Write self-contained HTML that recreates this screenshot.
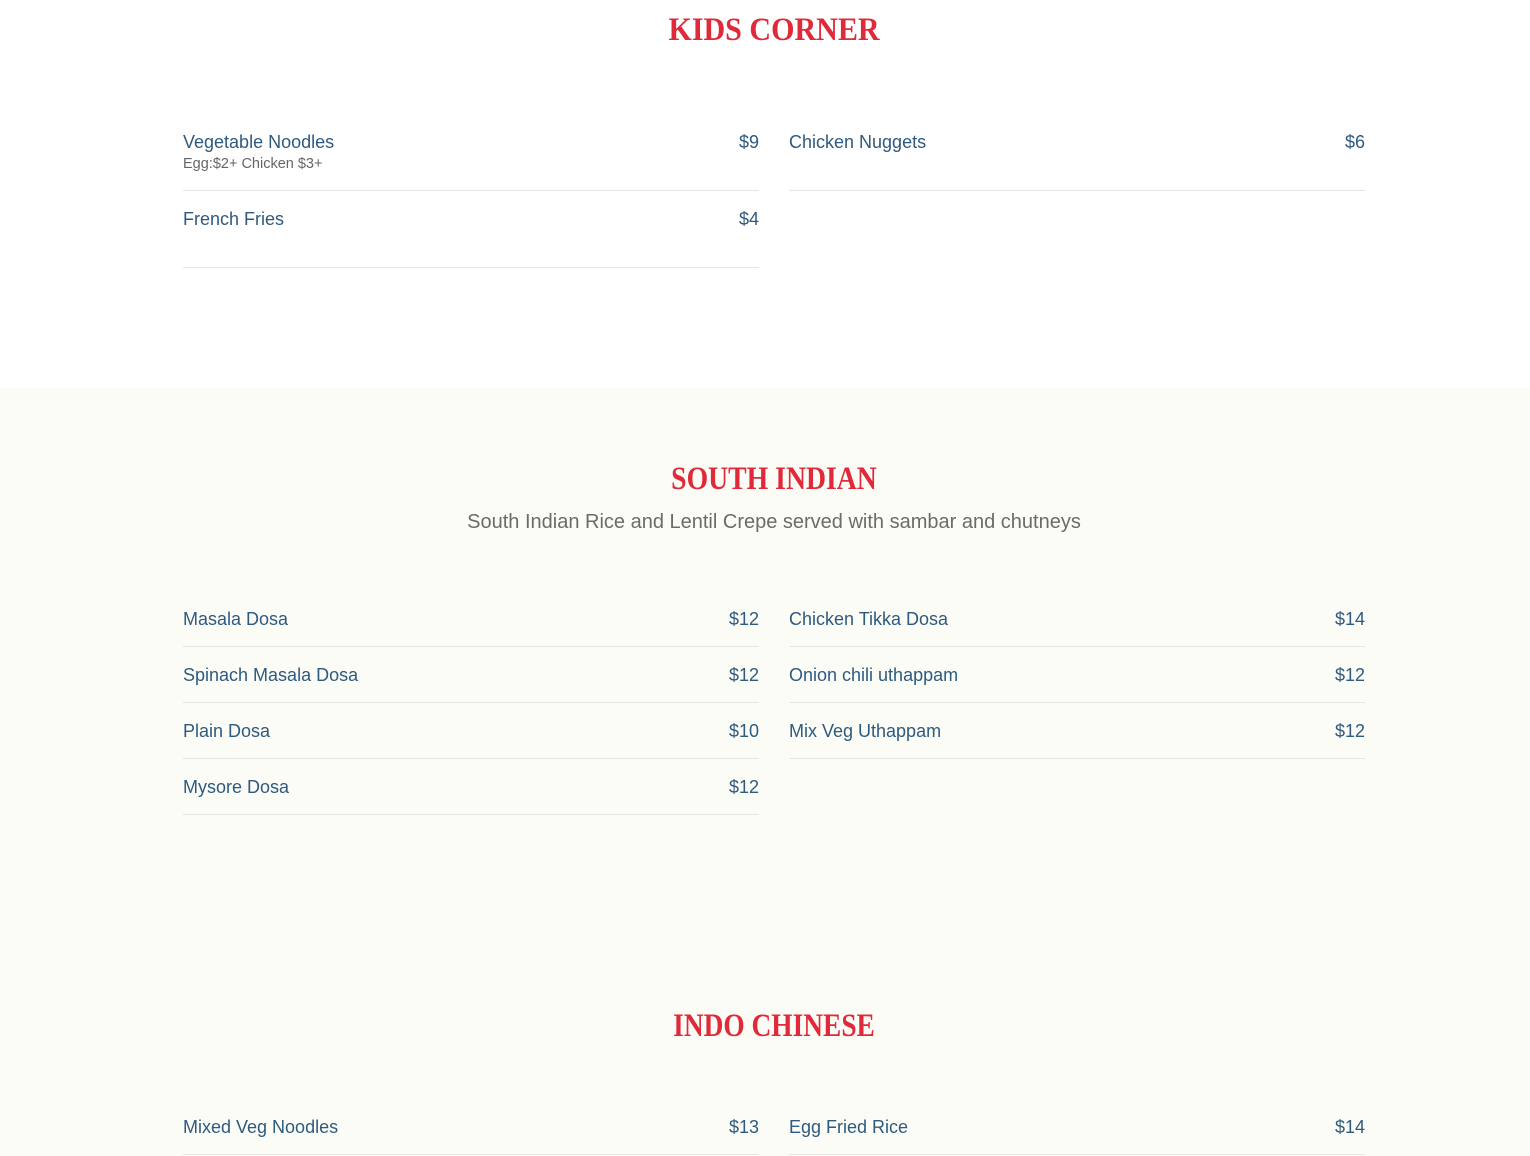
<!DOCTYPE html>
<html><head><meta charset="utf-8"><style>
body{margin:0;width:1530px;height:1156px;overflow:hidden;background:#fff;font-family:"Liberation Sans",sans-serif;position:relative}
.bg2{position:absolute;left:0;top:388px;width:1530px;height:768px;background:#fcfcf7}
h2{position:absolute;left:0;width:1548px;margin:0;text-align:center;font-family:"Liberation Serif",serif;font-weight:bold;color:#e02a3a;font-size:33px;line-height:40px}
.sub{position:absolute;left:0;width:1548px;text-align:center;color:#6b6b6b;font-size:20px}
.it{position:absolute;width:576px;border-bottom:1px solid #e6e6e6;color:#2e5a7f;font-size:18px;padding-top:1px;box-sizing:border-box}
.it .p{position:absolute;right:0;top:1px}
.it .d{color:#666;font-size:14.5px;margin-top:3px}
</style></head><body>
<div class="bg2"></div>
<h2 style="top:10px;transform:scaleX(0.91)">KIDS CORNER</h2>
<div class="it" style="left:183px;top:131px;height:60px">Vegetable Noodles<span class="p">$9</span><div class="d">Egg:$2+ Chicken $3+</div></div>
<div class="it" style="left:789px;top:131px;height:60px">Chicken Nuggets<span class="p">$6</span></div>
<div class="it" style="left:183px;top:208px;height:60px">French Fries<span class="p">$4</span></div>

<h2 style="top:459px;transform:scaleX(0.84)">SOUTH INDIAN</h2>
<div class="sub" style="top:511px">South Indian Rice and Lentil Crepe served with sambar and chutneys</div>
<div class="it" style="left:183px;top:608px;height:39px">Masala Dosa<span class="p">$12</span></div>
<div class="it" style="left:183px;top:664px;height:39px">Spinach Masala Dosa<span class="p">$12</span></div>
<div class="it" style="left:183px;top:720px;height:39px">Plain Dosa<span class="p">$10</span></div>
<div class="it" style="left:183px;top:776px;height:39px">Mysore Dosa<span class="p">$12</span></div>
<div class="it" style="left:789px;top:608px;height:39px">Chicken Tikka Dosa<span class="p">$14</span></div>
<div class="it" style="left:789px;top:664px;height:39px">Onion chili uthappam<span class="p">$12</span></div>
<div class="it" style="left:789px;top:720px;height:39px">Mix Veg Uthappam<span class="p">$12</span></div>

<h2 style="top:1006px;transform:scaleX(0.83)">INDO CHINESE</h2>
<div class="it" style="left:183px;top:1116px;height:39px">Mixed Veg Noodles<span class="p">$13</span></div>
<div class="it" style="left:789px;top:1116px;height:39px">Egg Fried Rice<span class="p">$14</span></div>
</body></html>
